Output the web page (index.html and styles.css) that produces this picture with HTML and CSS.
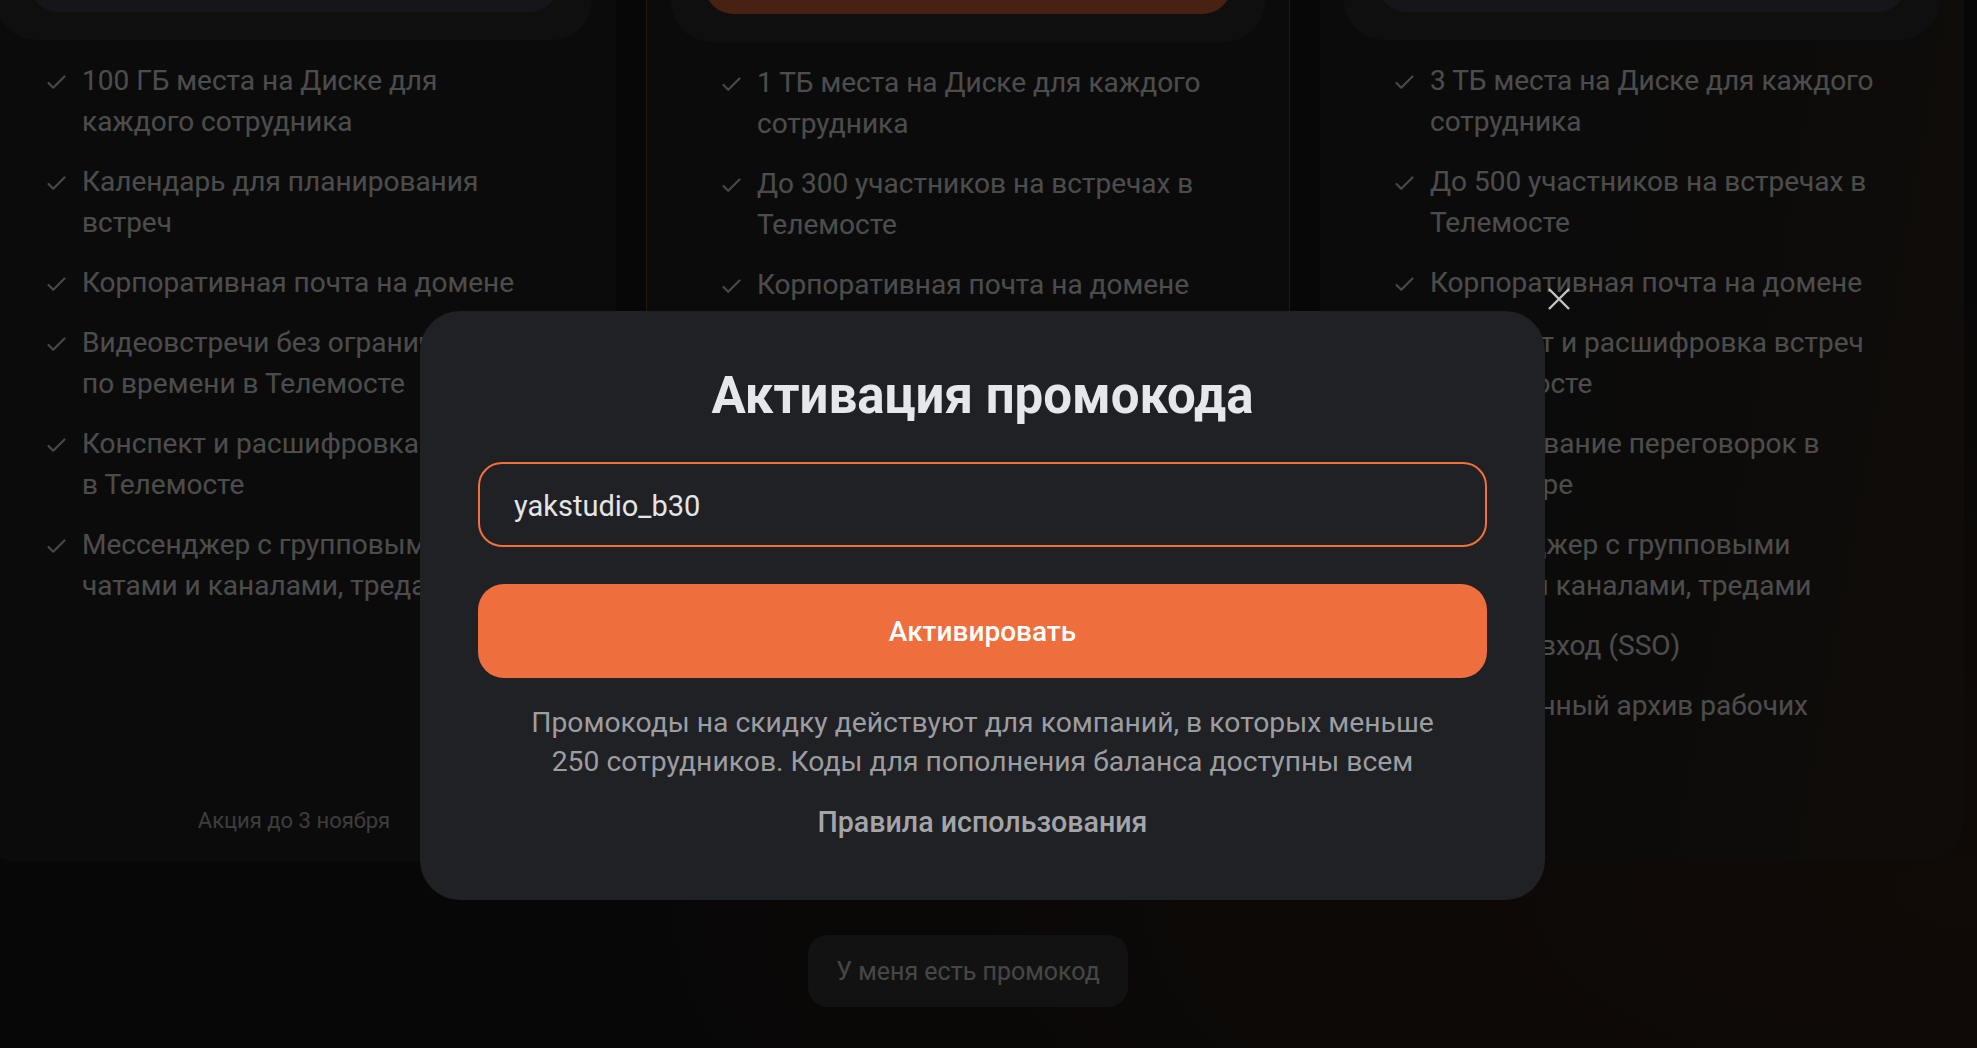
FILE: index.html
```html
<!DOCTYPE html>
<html lang="ru">
<head>
  <meta charset="UTF-8">
  <meta name="viewport" content="width=device-width, initial-scale=1.0">
  <title>Тарифы для бизнеса</title>
  <link rel="stylesheet" href="styles.css">
</head>
<body>
  <div class="page">
    <div class="plans">
      <div class="plan-card">
        <div class="plan-head">
          <a class="plan-btn" href="#" aria-label="Подключить тариф"></a>
        </div>
        <ul class="features">
          <li><svg class="check" viewBox="0 0 20 16"><path d="M1.5 8.5 L6.5 13.5 L18.5 1.5"/></svg><span>100 ГБ места на Диске для каждого сотрудника</span></li>
          <li><svg class="check" viewBox="0 0 20 16"><path d="M1.5 8.5 L6.5 13.5 L18.5 1.5"/></svg><span>Календарь для планирования встреч</span></li>
          <li><svg class="check" viewBox="0 0 20 16"><path d="M1.5 8.5 L6.5 13.5 L18.5 1.5"/></svg><span>Корпоративная почта на домене</span></li>
          <li><svg class="check" viewBox="0 0 20 16"><path d="M1.5 8.5 L6.5 13.5 L18.5 1.5"/></svg><span>Видеовстречи без ограничений по времени в Телемосте</span></li>
          <li><svg class="check" viewBox="0 0 20 16"><path d="M1.5 8.5 L6.5 13.5 L18.5 1.5"/></svg><span>Конспект и расшифровка встреч в Телемосте</span></li>
          <li><svg class="check" viewBox="0 0 20 16"><path d="M1.5 8.5 L6.5 13.5 L18.5 1.5"/></svg><span>Мессенджер с групповыми чатами и каналами, тредами</span></li>
        </ul>
        <div class="plan-note">Акция до 3 ноября</div>
      </div>

      <div class="plan-card plan-card--accent">
        <div class="plan-head">
          <a class="plan-btn" href="#" aria-label="Подключить тариф"></a>
        </div>
        <ul class="features">
          <li><svg class="check" viewBox="0 0 20 16"><path d="M1.5 8.5 L6.5 13.5 L18.5 1.5"/></svg><span>1 ТБ места на Диске для каждого сотрудника</span></li>
          <li><svg class="check" viewBox="0 0 20 16"><path d="M1.5 8.5 L6.5 13.5 L18.5 1.5"/></svg><span>До 300 участников на встречах в Телемосте</span></li>
          <li><svg class="check" viewBox="0 0 20 16"><path d="M1.5 8.5 L6.5 13.5 L18.5 1.5"/></svg><span>Корпоративная почта на домене</span></li>
        </ul>
      </div>

      <div class="plan-card plan-card--warm">
        <div class="plan-head">
          <a class="plan-btn" href="#" aria-label="Подключить тариф"></a>
        </div>
        <ul class="features">
          <li><svg class="check" viewBox="0 0 20 16"><path d="M1.5 8.5 L6.5 13.5 L18.5 1.5"/></svg><span>3 ТБ места на Диске для каждого сотрудника</span></li>
          <li><svg class="check" viewBox="0 0 20 16"><path d="M1.5 8.5 L6.5 13.5 L18.5 1.5"/></svg><span>До 500 участников на встречах в Телемосте</span></li>
          <li><svg class="check" viewBox="0 0 20 16"><path d="M1.5 8.5 L6.5 13.5 L18.5 1.5"/></svg><span>Корпоративная почта на домене</span></li>
          <li><svg class="check" viewBox="0 0 20 16"><path d="M1.5 8.5 L6.5 13.5 L18.5 1.5"/></svg><span>Конспект и расшифровка встреч в Телемосте</span></li>
          <li><svg class="check" viewBox="0 0 20 16"><path d="M1.5 8.5 L6.5 13.5 L18.5 1.5"/></svg><span>Бронирование переговорок в Календаре</span></li>
          <li><svg class="check" viewBox="0 0 20 16"><path d="M1.5 8.5 L6.5 13.5 L18.5 1.5"/></svg><span>Мессенджер с групповыми чатами и каналами, тредами</span></li>
          <li><svg class="check" viewBox="0 0 20 16"><path d="M1.5 8.5 L6.5 13.5 L18.5 1.5"/></svg><span>Единый вход (SSO)</span></li>
          <li><svg class="check" viewBox="0 0 20 16"><path d="M1.5 8.5 L6.5 13.5 L18.5 1.5"/></svg><span>Защищённый архив рабочих чатов</span></li>
        </ul>
      </div>
    </div>

    <div class="promo-row">
      <button class="promo-link" type="button">У меня есть промокод</button>
    </div>
  </div>

  <div class="overlay">
    <div class="modal">
      <button class="modal-close" type="button" aria-label="Закрыть">
        <svg viewBox="0 0 24 24"><path d="M2 2 L22 22 M22 2 L2 22"/></svg>
      </button>
      <h2 class="modal-title">Активация промокода</h2>
      <input class="promo-input" type="text" value="yakstudio_b30" autocomplete="off">
      <button class="promo-submit" type="button">Активировать</button>
      <p class="modal-hint">Промокоды на скидку действуют для компаний, в которых меньше 250 сотрудников. Коды для пополнения баланса доступны всем</p>
      <a class="modal-rules" href="#">Правила использования</a>
    </div>
  </div>
</body>
</html>
```

FILE: styles.css
```css
body {
  margin: 0;
  font-family: Roboto, "Noto Sans", sans-serif;
  background-color: #181818;
  background-image: radial-gradient(ellipse at 100% 85%, rgba(120, 62, 28, 0.35), transparent 55%);
  color: #fff;
  overflow: hidden;
  height: 1048px;
}

/* page under the dialog, scrolled down to the plan features */

.page {
  width: 1992px;
  margin: -240px 0 0 -28px;
}

.plans {
  display: flex;
  gap: 30px;
}

.plan-card {
  width: 644px;
  height: 1102px;
  box-sizing: border-box;
  padding: 24px 24px 26px;
  display: flex;
  flex-direction: column;
  background-color: #252525;
  border-radius: 48px;
}

.plan-card--accent {
  border: 1px solid #8c4a24;
  padding-top: 25px;
}

.plan-card--warm {
  background: linear-gradient(100deg, #252525 40%, #382b20 100%);
}

.plan-head {
  padding: 164px 34px 28px;
  background-color: #333333;
  border-radius: 40px;
}

.plan-btn {
  display: block;
  height: 64px;
  background-color: #474a54;
  border-radius: 28px;
}

.plan-card--accent .plan-btn {
  background-color: #ee6e3c;
}

.features {
  list-style: none;
  margin: 20px 0 0;
  padding: 0 59px 0 51px;
  display: flex;
  flex-direction: column;
  gap: 19px;
}

.features li {
  display: flex;
  align-items: flex-start;
  gap: 16px;
  font-size: 28px;
  line-height: 41px;
}

.check {
  flex: none;
  width: 19px;
  height: 15px;
  margin-top: 15px;
  fill: none;
  stroke: #f2f2f2;
  stroke-width: 2.3;
  stroke-linecap: round;
  stroke-linejoin: round;
}

.plan-note {
  margin-top: auto;
  text-align: center;
  font-size: 22px;
  line-height: 30px;
  color: #cccccc;
}

.promo-row {
  display: flex;
  justify-content: center;
  margin-top: 73px;
}

.promo-link {
  height: 72px;
  padding: 0 28px;
  border: none;
  border-radius: 20px;
  background-color: #3e3e3e;
  color: #ebebeb;
  font-family: inherit;
  font-size: 25px;
}

/* dialog */

.overlay {
  position: fixed;
  inset: 0;
  display: flex;
  justify-content: center;
  align-items: flex-start;
  padding: 311px 12px 0 0;
  background-color: rgba(0, 0, 0, 0.7);
}

.modal {
  position: relative;
  width: 1125px;
  box-sizing: border-box;
  padding: 55px 58px 58px;
  background-color: #202124;
  border-radius: 40px;
  text-align: center;
}

.modal-close {
  position: absolute;
  top: -24px;
  right: -26px;
  width: 24px;
  height: 24px;
  padding: 0;
  border: none;
  background: none;
  cursor: pointer;
}

.modal-close svg {
  display: block;
  width: 24px;
  height: 24px;
  fill: none;
  stroke: #c4c4c4;
  stroke-width: 2.4;
}

.modal-title {
  margin: 0;
  font-size: 51px;
  line-height: 60px;
  font-weight: 700;
  color: #e6e7ec;
}

.promo-input {
  display: block;
  width: 100%;
  height: 85px;
  box-sizing: border-box;
  margin-top: 36px;
  padding: 2px 34px 0;
  border: 2px solid #f2713a;
  border-radius: 24px;
  background: transparent;
  color: #e4e5e9;
  font-family: inherit;
  font-size: 29px;
  outline: none;
}

.promo-submit {
  display: block;
  width: 100%;
  height: 94px;
  margin-top: 37px;
  border: none;
  border-radius: 26px;
  background-color: #ee6e3e;
  color: #fff;
  font-family: inherit;
  font-size: 28px;
  font-weight: 500;
  cursor: pointer;
}

.modal-hint {
  max-width: 940px;
  margin: 25px auto 0;
  font-size: 28.3px;
  line-height: 39px;
  color: #9c9da1;
}

.modal-rules {
  display: inline-block;
  margin-top: 22px;
  font-size: 28.6px;
  line-height: 39px;
  font-weight: 500;
  color: #a4a5a9;
  text-decoration: none;
}
```
